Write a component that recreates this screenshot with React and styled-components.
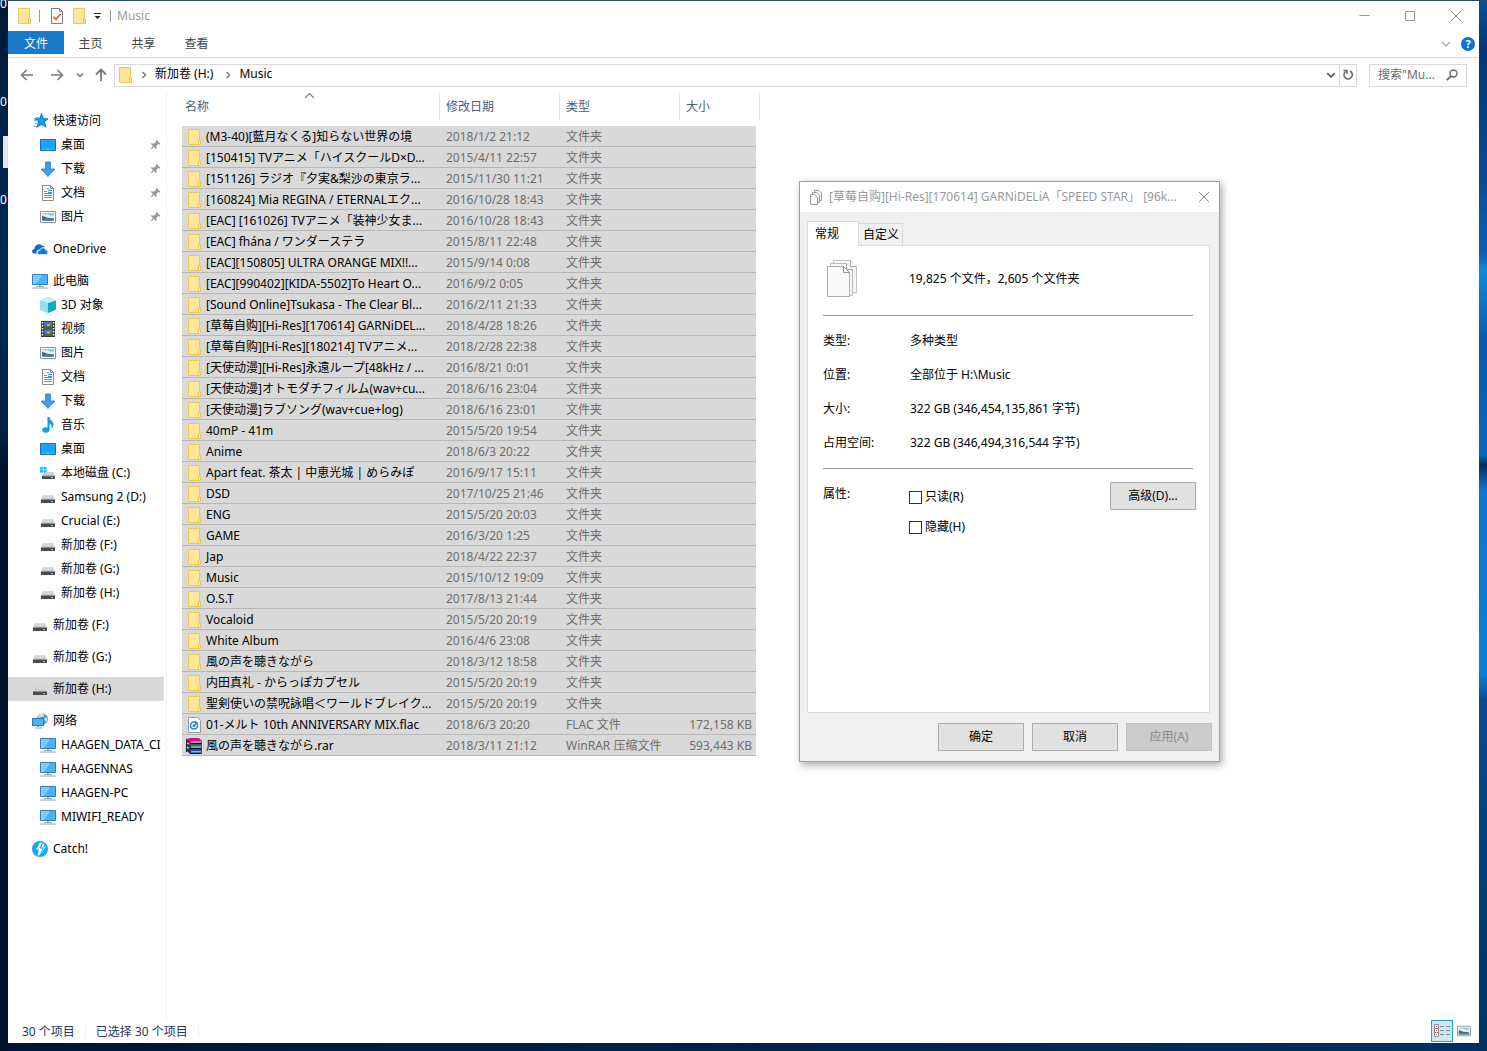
import styled, { createGlobalStyle, css } from "styled-components";

const GlobalStyle = createGlobalStyle`
  * {
    box-sizing: border-box;
  }
  body {
    margin: 0;
    font-family: "Noto Sans", "Noto Sans CJK SC", "Noto Sans CJK JP", sans-serif;
    font-size: 12px;
    line-height: 20px;
    color: #000;
  }
  button,
  input {
    font: inherit;
    color: inherit;
  }
  svg {
    display: block;
    flex: none;
  }
`;

const quickAccess = [
  { icon: "desktop", name: "桌面", pinned: true },
  { icon: "download", name: "下载", pinned: true },
  { icon: "document", name: "文档", pinned: true },
  { icon: "picture", name: "图片", pinned: true },
];

const thisPc = [
  { icon: "cube", name: "3D 对象" },
  { icon: "video", name: "视频" },
  { icon: "picture", name: "图片" },
  { icon: "document", name: "文档" },
  { icon: "download", name: "下载" },
  { icon: "music", name: "音乐" },
  { icon: "desktop", name: "桌面" },
  { icon: "systemDrive", name: "本地磁盘 (C:)" },
  { icon: "drive", name: "Samsung 2 (D:)" },
  { icon: "drive", name: "Crucial (E:)" },
  { icon: "drive", name: "新加卷 (F:)" },
  { icon: "drive", name: "新加卷 (G:)" },
  { icon: "drive", name: "新加卷 (H:)" },
];

const network = [
  { icon: "pc", name: "HAAGEN_DATA_CI" },
  { icon: "pc", name: "HAAGENNAS" },
  { icon: "pc", name: "HAAGEN-PC" },
  { icon: "pc", name: "MIWIFI_READY" },
];

const groups = [
  { icon: "star", name: "快速访问", children: quickAccess },
  { icon: "cloud", name: "OneDrive", children: [] },
  { icon: "pc", name: "此电脑", children: thisPc },
  { icon: "drive", name: "新加卷 (F:)", children: [] },
  { icon: "drive", name: "新加卷 (G:)", children: [] },
  { icon: "drive", name: "新加卷 (H:)", children: [], active: true },
  { icon: "network", name: "网络", children: network },
  { icon: "bolt", name: "Catch!", children: [] },
];

const files = [
  ["(M3-40)[藍月なくる]知らない世界の境", "2018/1/2 21:12"],
  ["[150415] TVアニメ「ハイスクールD×D...", "2015/4/11 22:57"],
  ["[151126] ラジオ『夕実&梨沙の東京ラ...", "2015/11/30 11:21"],
  ["[160824] Mia REGINA / ETERNALエク...", "2016/10/28 18:43"],
  ["[EAC] [161026] TVアニメ「装神少女ま...", "2016/10/28 18:43"],
  ["[EAC] fhána / ワンダーステラ", "2015/8/11 22:48"],
  ["[EAC][150805] ULTRA ORANGE MIX!!...", "2015/9/14 0:08"],
  ["[EAC][990402][KIDA-5502]To Heart O...", "2016/9/2 0:05"],
  ["[Sound Online]Tsukasa - The Clear Bl...", "2016/2/11 21:33"],
  ["[草莓自购][Hi-Res][170614] GARNiDEL...", "2018/4/28 18:26"],
  ["[草莓自购][Hi-Res][180214] TVアニメ...", "2018/2/28 22:38"],
  ["[天使动漫][Hi-Res]永遠ループ[48kHz / ...", "2016/8/21 0:01"],
  ["[天使动漫]オトモダチフィルム(wav+cu...", "2018/6/16 23:04"],
  ["[天使动漫]ラブソング(wav+cue+log)", "2018/6/16 23:01"],
  ["40mP - 41m", "2015/5/20 19:54"],
  ["Anime", "2018/6/3 20:22"],
  ["Apart feat. 茶太 | 中恵光城 | めらみぽ", "2016/9/17 15:11"],
  ["DSD", "2017/10/25 21:46"],
  ["ENG", "2015/5/20 20:03"],
  ["GAME", "2016/3/20 1:25"],
  ["Jap", "2018/4/22 22:37"],
  ["Music", "2015/10/12 19:09"],
  ["O.S.T", "2017/8/13 21:44"],
  ["Vocaloid", "2015/5/20 20:19"],
  ["White Album", "2016/4/6 23:08"],
  ["風の声を聴きながら", "2018/3/12 18:58"],
  ["内田真礼 - からっぽカプセル", "2015/5/20 20:19"],
  ["聖剣使いの禁呪詠唱＜ワールドブレイク...", "2015/5/20 20:19"],
  [
    "01-メルト 10th ANNIVERSARY MIX.flac",
    "2018/6/3 20:20",
    "FLAC 文件",
    "172,158 KB",
    "flac",
  ],
  [
    "風の声を聴きながら.rar",
    "2018/3/11 21:12",
    "WinRAR 压缩文件",
    "593,443 KB",
    "rar",
  ],
];

const properties = [
  ["类型:", "多种类型"],
  ["位置:", "全部位于 H:\\Music"],
  ["大小:", "322 GB (346,454,135,861 字节)"],
  ["占用空间:", "322 GB (346,494,316,544 字节)"],
];

const shapes = {
  folder: (
    <>
      <path d="M2.500.5h11v10.500h1v4.500h-12z" fill="#ffe69a" stroke="#ecc85a" />
      <path d="M12.500 15.500v-4.500h2v4.500z" fill="#fff0b8" stroke="#ebc550" />
    </>
  ),
  star: (
    <>
      <path
        d="M9.500 1l1.700 4.600 4.800.2-3.700 3 1.300 4.900-4.100-2.800-4.200 2.800 1.500-4.900L3 5.800l4.800-.2z"
        fill="#1e9bea"
        stroke="#1583d0"
        strokeWidth="1.200"
      />
      <path d="M4 4.500h3M2 7.500h4M3 10.500h3M2 13.500h3" stroke="#5cb8f0" />
    </>
  ),
  desktop: (
    <>
      <path d="M.5 2.500h15v11H.5z" fill="#1ea4fc" stroke="#1573b3" />
      <path d="M2 12.500h2M5 12.500h7M13 12.500h1" stroke="#62bffa" />
    </>
  ),
  download: (
    <path
      d="M5.500 1h5v7h4.500l-7 7.500L1 8h4.500z"
      fill="#3c9bea"
      stroke="#2a7fcb"
      strokeWidth=".8"
    />
  ),
  document: (
    <>
      <path d="M2.500.5h8l3 3v12h-11z" fill="#fff" stroke="#8b8b8b" />
      <path d="M10.500.5v3h3" fill="none" stroke="#8b8b8b" />
      <path d="M7 3.500h2M4 6.500h3M8 5.500h4M4 8.500h8M8 7.500h4" stroke="#2b9be6" />
      <path d="M4 10.500h8M4 12.500h8" stroke="#8c8c8c" />
    </>
  ),
  picture: (
    <>
      <path d="M.5 2.500h15v11H.5z" fill="#fff" stroke="#929292" />
      <path d="M2 4h12v8H2z" fill="#8ec9ef" />
      <path d="M2 5h5l4 2 3-1v3H2z" fill="#dceef8" />
      <path d="M2 7c3 0 4 2 7 2s4 .5 5 1v2H2z" fill="#42735c" />
      <path d="M2 10.500h12V12H2z" fill="#4f8fb8" />
    </>
  ),
  cube: (
    <>
      <path d="M0 3.500 8 0l8 3.500v9L8 16l-8-3.500z" fill="#3fc4d3" />
      <path d="M0 3.500 8 6v10l-8-3.500z" fill="#8ee3e6" />
      <path d="M8 6l8-2.500v9L8 16z" fill="#16a9bf" />
      <path d="M0 3.500 8 0l8 3.500L8 6z" fill="#c2f3f2" />
    </>
  ),
  video: (
    <>
      <path d="M1 0h14v16H1z" fill="#3c3c3c" />
      <path d="M4 1h8v6.500H4z" fill="#3e78c8" />
      <path d="M4 8.500h8V15H4z" fill="#3e78c8" />
      <path d="M4 5h8v2.500H4zM4 12.500h8V15H4z" fill="#4b6b30" />
      <path d="M7 3h3v2H7zM7 10.500h3v2H7z" fill="#efa62c" />
      <path
        d="M2.500 1v14M13.500 1v14"
        stroke="#fff"
        strokeWidth="1.400"
        strokeDasharray="1.500 1.500"
      />
    </>
  ),
  music: (
    <>
      <ellipse cx="5.800" cy="13" rx="3.600" ry="2.800" fill="#129bf0" />
      <path
        d="M7.500 0h2c0 3 4 4 4 7.500 0 2-1 3.500-2 4 .8-3-.5-4.500-2-5V13h-2z"
        fill="#129bf0"
      />
    </>
  ),
  drive: (
    <>
      <path d="M3.500 6h9L15 10H1z" fill="#cfd2d6" />
      <path d="M1 10h14v4H1z" fill="#4a4d50" />
      <path d="M1 10h14v1H1z" fill="#8a8d90" />
      <path d="M11 12h2v1h-2z" fill="#5dfa67" />
    </>
  ),
  systemDrive: (
    <>
      <path d="M4.500 7h8.500l2 4H2z" fill="#cfd2d6" />
      <path d="M2 11h13v3H2z" fill="#4a4d50" />
      <path d="M2 10.500h13v1H2z" fill="#8a8d90" />
      <path d="M11 12h2v1h-2z" fill="#5dfa67" />
      <path d="M0 2h3v2.500H0zM3.500 2h3v2.500h-3zM0 5h3v2.500H0zM3.500 5h3v2.500h-3z" fill="#17c0f2" />
    </>
  ),
  cloud: (
    <>
      <path
        d="M1.500 12.500C-1 11 0 8 2.500 8c0-3.500 4-6.500 7.500-3.500 2 .3 2.500 1 3 1.800-3-.6-4.500.7-5 2.200-3 0-4 2-3.200 4z"
        fill="#0f6fc5"
      />
      <path
        d="M7 13.500c-2.500-.5-2-4 .8-4 .4-3 4.700-3.500 5.700-.8 3 .3 3 4.800.5 4.800z"
        fill="#0b7fe0"
        stroke="#fff"
        strokeWidth=".6"
      />
    </>
  ),
  pc: (
    <>
      <path d="M.5 1.500h15v10H.5z" fill="#45b4fa" stroke="#3c7ca8" />
      <path d="M1 2h9l-6 9H1z" fill="#7bcdfc" />
      <path d="M7 12h2v1h3v1H4v-1h3z" fill="#9cabb8" />
      <path d="M0 15h16" stroke="#8fa2b3" />
    </>
  ),
  network: (
    <>
      <circle cx="10.500" cy="6" r="5.500" fill="#5d9bbd" />
      <path d="M7 2c2-2 4-1 5 0s-1 2-3 2-2 2-3 1zM12 6l3-2c1 2 0 4-1 5z" fill="#c9e4ee" />
      <path d="M.5 5.500h11v7H.5z" fill="#45b4fa" stroke="#2f75a5" />
      <path d="M5 13h2v1H5zM3 14.500h7v1H3z" fill="#8fa2b3" />
    </>
  ),
  bolt: (
    <>
      <circle cx="8" cy="8" r="8" fill="#12aaf0" />
      <path d="M8 1.500 4 8.500h3L5.500 14l2 .5 3-7H7.500L10 2z" fill="#fff" />
      <path d="M10.500 2.500 9.500 6.500H12L8.500 14l5-8.500h-2.500l1.500-2.500z" fill="#fff" />
    </>
  ),
  flac: (
    <>
      <path d="M2.500.5h9l3 3v12h-12z" fill="#fff" stroke="#9a9a9a" />
      <circle cx="8" cy="8.500" r="3.500" fill="none" stroke="#2685d6" strokeWidth="1.600" />
      <circle cx="8" cy="8.500" r="1.500" fill="#2685d6" />
      <path d="M9.500 8V4.500l2 1" fill="none" stroke="#2685d6" />
    </>
  ),
  rar: (
    <>
      <path d="M0 1.500 4 0h9l3 3v2.500H4L0 4z" fill="#c8147c" />
      <path d="M0 6 4 5.500h12V10H4L0 8z" fill="#1f6f6a" />
      <path d="M0 10.500 4 10h12v5.500H4L0 13z" fill="#1b4fae" />
      <path d="M4 5.500h11.500M4 10.500h11.500M4 15.500h11.500" stroke="#111" strokeWidth="1.200" />
      <path d="M5 4h10M5 9h10M5 13.800h10" stroke="#e8e8e8" strokeWidth=".9" />
      <path d="M0 2 4 4.500M0 6.500l4 2.500M0 11l4 2.500M.5 1v13M4 5v10.500" stroke="#222" />
    </>
  ),
};

function Icon({ name }) {
  return (
    <svg width="16" height="16" viewBox="0 0 16 16" aria-hidden="true">
      {shapes[name]}
    </svg>
  );
}

function Chevron({ size = 8, direction = "down", color = "#777", weight = 1 }) {
  const paths = {
    down: "M1 2.500l3 3 3-3",
    up: "M0 4.500l4-4 4 4",
    right: "M2.500 1l3 3-3 3",
  };
  return (
    <svg width={size} height={size} viewBox="0 0 8 8" aria-hidden="true">
      <path d={paths[direction]} fill="none" stroke={color} strokeWidth={weight} />
    </svg>
  );
}

function Pin() {
  return (
    <svg width="12" height="12" viewBox="0 0 12 12" aria-hidden="true">
      <path
        d="M7 .5 11.500 5l-1.500.5L9 5 7.500 7v3.500L5 8 .5 11.500 4 7 1.500 4.500H5L7 3z"
        fill="#8d99a3"
      />
    </svg>
  );
}

function PagesIcon() {
  return (
    <svg width="32" height="40" viewBox="0 0 32 40" aria-hidden="true">
      <path d="M6.500 1.500h17l6 6v26h-23z" fill="#f6f6f6" stroke="#c2c2c2" />
      <path d="M23.500 1.500v6h6" fill="#fff" stroke="#a5a5a5" />
      <path d="M3.500 4.500h16l6 6v26h-22z" fill="#f6f6f6" stroke="#b8b8b8" />
      <path d="M19.500 4.500v6h6" fill="#fff" stroke="#9a9a9a" />
      <path d="M.5 7.500h16l6 6v24H.5z" fill="#fafafa" stroke="#adadad" />
      <path d="M16.500 7.500v6h6z" fill="#fff" stroke="#969696" />
    </svg>
  );
}

function NavItem({ item, nested }) {
  return (
    <NavLink href="#" $nested={nested} $active={item.active}>
      <Icon name={item.icon} />
      <NavName>{item.name}</NavName>
      {item.pinned && <Pin />}
    </NavLink>
  );
}

function TitleBar() {
  return (
    <TitleRow>
      <QuickTools>
        <Icon name="folder" />
        <ToolDivider />
        <ToolButton aria-label="属性">
          <svg width="14" height="16" viewBox="0 0 14 16">
            <path d="M1.500.5h8l3 3v12h-11z" fill="#fff" stroke="#7d7d7d" />
            <path d="M9.500.5v3h3" fill="none" stroke="#7d7d7d" />
            <path d="M3.500 9l2.500 2.500L10.500 6" fill="none" stroke="#e8622c" strokeWidth="1.800" />
          </svg>
        </ToolButton>
        <ToolButton aria-label="新建文件夹">
          <Icon name="folder" />
        </ToolButton>
        <MenuButton aria-label="自定义快速访问工具栏">
          <svg width="8" height="8" viewBox="0 0 8 8">
            <path d="M0 1.500h7" stroke="#222" />
            <path d="M.5 4h6l-3 3z" fill="#222" />
          </svg>
        </MenuButton>
        <ToolDivider />
      </QuickTools>
      <WindowTitle>Music</WindowTitle>
      <CaptionButton aria-label="最小化">
        <svg width="11" height="11" viewBox="0 0 11 11">
          <path d="M.5 4.500h10" stroke="#999" />
        </svg>
      </CaptionButton>
      <CaptionButton aria-label="最大化">
        <svg width="11" height="11" viewBox="0 0 11 11">
          <path d="M.5.500h9v9H.5z" fill="none" stroke="#999" />
        </svg>
      </CaptionButton>
      <CaptionButton aria-label="关闭">
        <CloseIcon />
      </CaptionButton>
    </TitleRow>
  );
}

function CloseIcon() {
  return (
    <svg width="11" height="11" viewBox="0 0 11 11" aria-hidden="true">
      <path d="M0 0l10 10M10 0L0 10" stroke="#888" />
    </svg>
  );
}

function AddressBar() {
  return (
    <AddressRow>
      <NavButton $width={30} aria-label="返回">
        <svg width="14" height="12" viewBox="0 0 14 12">
          <path d="M6.500 1 1.500 6l5 5M1.500 6H13" fill="none" stroke="#7a7a7a" strokeWidth="1.600" />
        </svg>
      </NavButton>
      <NavButton $width={30} aria-label="前进">
        <svg width="14" height="12" viewBox="0 0 14 12">
          <path d="M7.500 1l5 5-5 5M12.500 6H1" fill="none" stroke="#7a7a7a" strokeWidth="1.600" />
        </svg>
      </NavButton>
      <NavButton $width={16} aria-label="最近浏览的位置">
        <Chevron weight={1.500} />
      </NavButton>
      <NavButton $width={26} aria-label="上移">
        <svg width="12" height="14" viewBox="0 0 12 14">
          <path d="M1 6.500l5-5 5 5M6 1.500V13" fill="none" stroke="#7a7a7a" strokeWidth="1.800" />
        </svg>
      </NavButton>
      <PathBox>
        <Icon name="folder" />
        <Separator>
          <Chevron direction="right" weight={1.400} />
        </Separator>
        <Crumb>新加卷 (H:)</Crumb>
        <Separator>
          <Chevron direction="right" weight={1.400} />
        </Separator>
        <Crumb>Music</Crumb>
        <PathTools>
          <NavButton $width={16} aria-label="以前的位置">
            <Chevron size={10} weight={1.500} color="#666" />
          </NavButton>
          <RefreshButton aria-label="刷新">
            <svg width="12" height="12" viewBox="0 0 12 12">
              <path
                d="M8 2a4.200 4.200 0 1 1-4.500.5M1.500 1.500h3.500v3.500"
                fill="none"
                stroke="#666"
                strokeWidth="1.500"
              />
            </svg>
          </RefreshButton>
        </PathTools>
      </PathBox>
      <SearchBox>
        <SearchInput aria-label="搜索" placeholder={'搜索"Mu...'} />
        <svg width="12" height="12" viewBox="0 0 12 12">
          <circle cx="7.500" cy="4.500" r="3.500" fill="none" stroke="#666" strokeWidth="1.400" />
          <path d="M5 7 .8 11.200" stroke="#666" strokeWidth="1.800" />
        </svg>
      </SearchBox>
    </AddressRow>
  );
}

function FileTable() {
  return (
    <Table>
      <colgroup>
        <col width="258" />
        <col width="120" />
        <col width="120" />
        <col width="80" />
      </colgroup>
      <thead>
        <tr>
          <Th $first>
            名称
            <SortMark>
              <Chevron direction="up" size={9} />
            </SortMark>
          </Th>
          <Th>修改日期</Th>
          <Th>类型</Th>
          <Th>大小</Th>
        </tr>
      </thead>
      <tbody>
        <SpacerRow aria-hidden="true">
          <td colSpan="4" />
        </SpacerRow>
        {files.map(([name, date, type = "文件夹", size = "", icon = "folder"]) => (
          <tr key={name}>
            <Td>
              <FileName>
                <Icon name={icon} />
                <span>{name}</span>
              </FileName>
            </Td>
            <Td $muted>{date}</Td>
            <Td $muted>{type}</Td>
            <SizeTd $muted>{size}</SizeTd>
          </tr>
        ))}
      </tbody>
    </Table>
  );
}

function PropertiesDialog() {
  return (
    <Dialog role="dialog" aria-labelledby="properties-title">
      <DialogTitleBar>
        <svg width="14" height="15" viewBox="0 0 14 15" aria-hidden="true">
          <path d="M5.500 2.500v-2h4.500l2.500 2.500v7.500h-2" fill="none" stroke="#999" />
          <path d="M3.500 4.500v-2h4l3 2.500v7.500h-2" fill="none" stroke="#999" />
          <path d="M1.500 4.500h4l3 2.500v7.500h-7z" fill="#fff" stroke="#999" />
        </svg>
        <DialogTitle id="properties-title">
          [草莓自购][Hi-Res][170614] GARNiDELiA「SPEED STAR」 [96k...
        </DialogTitle>
        <DialogClose aria-label="关闭">
          <CloseIcon />
        </DialogClose>
      </DialogTitleBar>
      <TabList role="tablist">
        <Tab role="tab" aria-selected="true" $active>
          常规
        </Tab>
        <Tab role="tab" aria-selected="false">
          自定义
        </Tab>
      </TabList>
      <Pane role="tabpanel">
        <Summary>
          <PagesIcon />
          <span>19,825 个文件，2,605 个文件夹</span>
        </Summary>
        <Rule />
        <Details>
          {properties.map(([label, value]) => (
            <DetailRow key={label}>
              <dt>{label}</dt>
              <dd>{value}</dd>
            </DetailRow>
          ))}
        </Details>
        <Rule />
        <Attributes>
          <AttributeLabel>属性:</AttributeLabel>
          <div>
            <CheckLabel>
              <Checkbox type="checkbox" />
              只读(R)
            </CheckLabel>
            <CheckLabel>
              <Checkbox type="checkbox" />
              隐藏(H)
            </CheckLabel>
          </div>
          <Button>高级(D)...</Button>
        </Attributes>
      </Pane>
      <DialogFooter>
        <Button>确定</Button>
        <Button>取消</Button>
        <Button disabled>应用(A)</Button>
      </DialogFooter>
    </Dialog>
  );
}

export default function App() {
  return (
    <Desktop>
      <GlobalStyle />
      <DesktopLabel $top={-6}>0</DesktopLabel>
      <DesktopLabel $top={92}>0</DesktopLabel>
      <DesktopThumb />
      <DesktopLabel $top={190}>0</DesktopLabel>
      <Explorer>
        <TitleBar />
        <Ribbon>
          <FileTab>文件</FileTab>
          <RibbonTab>主页</RibbonTab>
          <RibbonTab>共享</RibbonTab>
          <RibbonTab>查看</RibbonTab>
          <RibbonTools>
            <ToolButton aria-label="展开功能区">
              <Chevron size={10} color="#999" />
            </ToolButton>
            <HelpButton aria-label="帮助">?</HelpButton>
          </RibbonTools>
        </Ribbon>
        <AddressBar />
        <Content>
          <Sidebar>
            {groups.map((group) => (
              <NavGroup key={group.name}>
                <NavItem item={group} />
                {group.children.map((item) => (
                  <NavItem key={item.name} item={item} nested />
                ))}
              </NavGroup>
            ))}
          </Sidebar>
          <Main>
            <FileTable />
          </Main>
        </Content>
        <StatusBar>
          <StatusText>30 个项目</StatusText>
          <StatusText>已选择 30 个项目</StatusText>
          <ViewButtons>
            <ViewButton $active aria-label="详细信息">
              <svg width="18" height="14" viewBox="0 0 18 14">
                <path d="M1.500.5h4v12h-4zM1.500 4.500h4M1.500 8.500h4" fill="#fff" stroke="#8c8c8c" />
                <path d="M3 2.500h1M3 6.500h1M3 10.500h1" stroke="#b0483c" />
                <path
                  d="M7 2.500h4M13 2.500h4M7 6.500h4M13 6.500h4M7 10.500h4M13 10.500h4"
                  stroke="#7a8a94"
                />
              </svg>
            </ViewButton>
            <ViewButton aria-label="大缩略图">
              <svg width="14" height="12" viewBox="0 2 16 12">
                {shapes.picture}
              </svg>
            </ViewButton>
          </ViewButtons>
        </StatusBar>
      </Explorer>
      <PropertiesDialog />
    </Desktop>
  );
}

const Desktop = styled.div`
  position: relative;
  display: flex;
  min-height: 100vh;
  padding: 1px 8px 8px;
  background:
    linear-gradient(#2c4a6e, #2c4a6e) top / 100% 1px no-repeat,
    linear-gradient(#001a38, #002a54 25%, #002348 40%, #00142c 45%, #001228)
      left / 8px 100% no-repeat,
    linear-gradient(
        #0b4f9c 0,
        #063672 50px,
        #0a4a94 180px,
        #0b62b8 255px,
        #0c8ae0 270px,
        #0a5cae 340px,
        #0868bf 455px,
        #052c5e 465px,
        #0b78d0 490px,
        #0b7fd8 675px,
        #0a4a90 700px,
        #03305f 1051px
      )
      right / 8px 100% no-repeat,
    linear-gradient(90deg, #001530, #003064);
`;

/* what shows of the desktop icons left of the window */
const DesktopLabel = styled.span`
  position: absolute;
  top: ${(props) => props.$top}px;
  left: 0;
  color: #fff;
`;

const DesktopThumb = styled.span`
  position: absolute;
  top: 136px;
  left: 3px;
  width: 5px;
  height: 32px;
  background: #e4e6e8;
`;

const Explorer = styled.main`
  display: flex;
  flex: 1;
  flex-direction: column;
  min-width: 0;
  background: #fff;
`;

const TitleRow = styled.header`
  display: flex;
  height: 30px;
`;

const QuickTools = styled.div`
  display: flex;
  align-items: center;
  padding-left: 8px;
`;

const ToolDivider = styled.span`
  width: 1px;
  height: 12px;
  margin: 0 6px 0 7px;
  background: #999;
`;

const plainButton = css`
  display: flex;
  align-items: center;
  justify-content: center;
  padding: 0;
  border: 0;
  background: none;
`;

const ToolButton = styled.button`
  ${plainButton}
  width: 22px;
`;

const MenuButton = styled.button`
  ${plainButton}
  width: 10px;
  margin-left: 3px;
`;

const WindowTitle = styled.h1`
  flex: 1;
  margin: 0;
  font-size: 12px;
  font-weight: 400;
  line-height: 30px;
  color: #999;
`;

const CaptionButton = styled.button`
  ${plainButton}
  width: 46px;
`;

const Ribbon = styled.div`
  display: flex;
  height: 27px;
  border-bottom: 1px solid #dadbdc;
  color: #444;
`;

const RibbonTab = styled.button`
  ${plainButton}
  width: 53px;
  height: 23px;
  padding-top: 2px;
`;

const FileTab = styled(RibbonTab)`
  width: 56px;
  background: #1979ca;
  color: #fff;
`;

const RibbonTools = styled.div`
  display: flex;
  align-items: center;
  gap: 4px;
  margin-left: auto;
  padding-right: 4px;
`;

const HelpButton = styled.button`
  ${plainButton}
  width: 14px;
  height: 14px;
  border-radius: 50%;
  background: #0a74d0;
  color: #fff;
  font-size: 11px;
  font-weight: 700;
  line-height: 14px;
`;

const AddressRow = styled.div`
  display: flex;
  align-items: center;
  height: 34px;
  padding: 0 12px 0 4px;
`;

const NavButton = styled.button`
  ${plainButton}
  width: ${(props) => props.$width}px;
  height: 23px;
`;

const PathBox = styled.nav`
  display: flex;
  flex: 1;
  align-items: center;
  height: 23px;
  padding-left: 2px;
  border: 1px solid #d9d9d9;
`;

const Crumb = styled.button`
  ${plainButton}
  padding: 0 4px 2px 1px;
`;

const Separator = styled.span`
  display: flex;
  justify-content: center;
  width: 21px;
`;

const PathTools = styled.div`
  display: flex;
  align-items: center;
  height: 21px;
  margin-left: auto;
`;

const RefreshButton = styled.button`
  ${plainButton}
  width: 17px;
  height: 21px;
  border-left: 1px solid #d9d9d9;
`;

const SearchBox = styled.div`
  display: flex;
  align-items: center;
  width: 98px;
  height: 23px;
  margin-left: 12px;
  padding: 0 8px;
  border: 1px solid #d9d9d9;
`;

const SearchInput = styled.input`
  flex: 1;
  min-width: 0;
  height: 20px;
  padding: 0;
  border: 0;
  outline: 0;
  &::placeholder {
    color: #6d6d6d;
    opacity: 1;
  }
`;

const Content = styled.div`
  display: flex;
  flex: 1;
`;

const Sidebar = styled.nav`
  width: 159px;
  padding: 17px 2px 0 0;
  border-right: 1px solid #f3f3f3;
`;

const NavGroup = styled.div`
  margin-bottom: 8px;
`;

const NavLink = styled.a`
  display: flex;
  align-items: center;
  gap: 5px;
  height: 24px;
  padding-left: ${(props) => (props.$nested ? 32 : 24)}px;
  padding-right: ${(props) => (props.$nested ? 3 : 0)}px;
  background: ${(props) => (props.$active ? "#d9d9d9" : "transparent")};
  color: #000;
  text-decoration: none;
`;

const NavName = styled.span`
  flex: 1;
  white-space: nowrap;
`;

const Main = styled.section`
  flex: 1;
  min-width: 0;
  padding: 1px 15px 0;
`;

const Table = styled.table`
  width: 578px;
  table-layout: fixed;
  border-spacing: 0;
`;

const Th = styled.th`
  position: relative;
  height: 27px;
  padding: 0 0 0 ${(props) => (props.$first ? 3 : 6)}px;
  border-right: 1px solid #e5e5e5;
  color: #4c607a;
  font-weight: 400;
  text-align: left;
`;

const SortMark = styled.span`
  position: absolute;
  top: 0;
  left: calc(50% - 6px);
`;

const SpacerRow = styled.tr`
  height: 6px;
  td {
    padding: 0;
  }
`;

const Td = styled.td`
  height: 21px;
  padding: 0 0 0 6px;
  background: #d9d9d9;
  box-shadow: inset 0 -1px #b7b7b7;
  color: ${(props) => (props.$muted ? "#6d6d6d" : "#000")};
  line-height: 20px;
  white-space: nowrap;
`;

const SizeTd = styled(Td)`
  padding: 0 4px 0 0;
  border-right: 4px solid #fff;
  text-align: right;
`;

const FileName = styled.div`
  display: flex;
  align-items: center;
  gap: 4px;
  margin-left: -2px;
`;

const StatusBar = styled.footer`
  display: flex;
  align-items: center;
  height: 24px;
  padding: 0 4px;
  color: #1e395b;
`;

const StatusText = styled.span`
  padding: 2px 10px 0;
  border-right: 1px solid #f0f0f0;
  line-height: 12px;
`;

const ViewButtons = styled.div`
  display: flex;
  margin-left: auto;
`;

const ViewButton = styled.button`
  ${plainButton}
  width: 22px;
  height: 22px;
  border: 1px solid ${(props) => (props.$active ? "#26a0da" : "transparent")};
  background: ${(props) => (props.$active ? "#cce8f6" : "none")};
`;

const Dialog = styled.div`
  position: absolute;
  top: 181px;
  left: 799px;
  width: 421px;
  border: 1px solid #a0a0a0;
  background: #f0f0f0;
  box-shadow: 2px 3px 8px rgba(0, 0, 0, 0.35);
`;

const DialogTitleBar = styled.div`
  display: flex;
  align-items: center;
  height: 30px;
  padding-left: 9px;
  background: #fff;
`;

const DialogTitle = styled.h2`
  flex: 1;
  margin: 0 0 0 6px;
  color: #999;
  font-size: 12px;
  font-weight: 400;
  white-space: nowrap;
`;

const DialogClose = styled.button`
  ${plainButton}
  width: 30px;
  height: 30px;
`;

const TabList = styled.div`
  display: flex;
  align-items: flex-end;
  padding: 9px 7px 0;
`;

const Tab = styled.button`
  position: relative;
  width: ${(props) => (props.$active ? 52 : 44)}px;
  height: ${(props) => (props.$active ? 25 : 22)}px;
  margin-bottom: ${(props) => (props.$active ? -1 : 0)}px;
  padding: 0 0 0 ${(props) => (props.$active ? 7 : 4)}px;
  border: 1px solid #d9d9d9;
  border-bottom: 0;
  border-left-width: ${(props) => (props.$active ? 1 : 0)}px;
  background: ${(props) => (props.$active ? "#fff" : "#f0f0f0")};
  line-height: 20px;
  text-align: left;
  white-space: nowrap;
`;

const Pane = styled.div`
  min-height: 468px;
  margin: 0 9px 0 7px;
  padding: 0 13px 0 15px;
  border: 1px solid #dcdcdc;
  background: #fff;
`;

const Summary = styled.div`
  display: flex;
  align-items: center;
  gap: 50px;
  height: 69px;
  padding: 0 0 3px 4px;
`;

const Rule = styled.hr`
  height: 1px;
  margin: 0 3px 0 0;
  border: 0;
  background: #a0a0a0;
`;

const Details = styled.dl`
  margin: 0;
  padding: 8px 0;
`;

const DetailRow = styled.div`
  display: grid;
  grid-template-columns: 87px 1fr;
  align-items: center;
  height: 34px;
  dd {
    margin: 0;
  }
`;

const Attributes = styled.div`
  display: grid;
  grid-template-columns: 86px 1fr auto;
  align-items: start;
  padding-top: 13px;
`;

const AttributeLabel = styled.span`
  line-height: 24px;
`;

const CheckLabel = styled.label`
  display: flex;
  align-items: center;
  gap: 3px;
  height: 30px;
`;

const Checkbox = styled.input`
  appearance: none;
  width: 13px;
  height: 13px;
  margin: 0;
  border: 1px solid #333;
  background: #fff;
`;

const Button = styled.button`
  width: 86px;
  height: 28px;
  padding: 0;
  border: 1px solid #adadad;
  background: #e1e1e1;
  &:disabled {
    border-color: #bfbfbf;
    background: #ccc;
    color: #8a8a8a;
  }
`;

const DialogFooter = styled.div`
  display: flex;
  justify-content: flex-end;
  gap: 8px;
  padding: 10px 7px;
`;
